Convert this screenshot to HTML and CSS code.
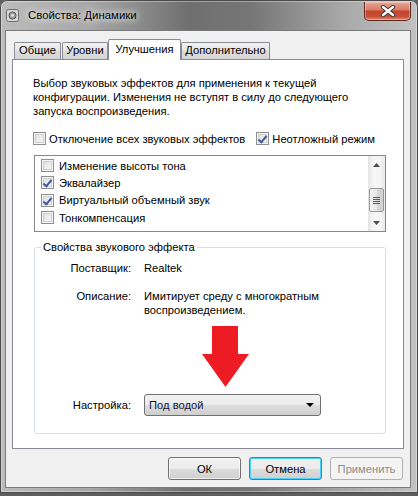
FILE: index.html
```html
<!DOCTYPE html>
<html lang="ru">
<head>
  <meta charset="UTF-8" />
  <title>Свойства: Динамики</title>
  <link rel="stylesheet" href="styles.css">
</head>
<body>
  <div class="window">
    <div class="titlebar">
      <svg class="app-icon" width="13" height="13" viewBox="0 0 13 13">
        <rect x="0.5" y="0.5" width="12" height="12" rx="2" fill="#d8d8d8" stroke="#6c6c6c"/>
        <circle cx="6.5" cy="6.5" r="3.6" fill="#9a9a9a" stroke="#5e5e5e"/>
        <circle cx="6.5" cy="6.5" r="1.4" fill="#e6e6e6"/>
      </svg>
      <span class="title">Свойства: Динамики</span>
      <div class="close-btn">
        <svg width="16" height="12" viewBox="0 0 16 12">
          <path d="M3 2 L13 10 M13 2 L3 10" stroke="#3a3a3a" stroke-width="4.4" stroke-linecap="round"/>
          <path d="M3 2 L13 10 M13 2 L3 10" stroke="#fff" stroke-width="2.4" stroke-linecap="round"/>
        </svg>
      </div>
    </div>

    <div class="client">
      <div class="tabs">
        <div class="tab tab-general">Общие</div>
        <div class="tab tab-levels">Уровни</div>
        <div class="tab tab-active">Улучшения</div>
        <div class="tab tab-advanced">Дополнительно</div>
      </div>

      <div class="panel">
        <p class="intro">Выбор звуковых эффектов для применения к текущей конфигурации. Изменения не вступят в силу до следующего запуска воспроизведения.</p>

        <div class="options">
          <label class="check"><span class="box"></span>Отключение всех звуковых эффектов</label>
          <label class="check"><span class="box checked"></span>Неотложный режим</label>
        </div>

        <div class="listbox">
          <ul class="effects">
            <li class="check"><span class="box"></span>Изменение высоты тона</li>
            <li class="check"><span class="box checked"></span>Эквалайзер</li>
            <li class="check"><span class="box checked"></span>Виртуальный объемный звук</li>
            <li class="check"><span class="box"></span>Тонкомпенсация</li>
          </ul>
          <div class="scrollbar">
            <div class="sb-arrow"><svg width="7" height="4" viewBox="0 0 7 4"><path d="M0 4 L3.5 0 L7 4 Z" fill="#4d4d4d"/></svg></div>
            <div class="sb-track">
              <div class="sb-thumb"><span></span><span></span><span></span><span></span></div>
            </div>
            <div class="sb-arrow"><svg width="7" height="4" viewBox="0 0 7 4"><path d="M0 0 L7 0 L3.5 4 Z" fill="#4d4d4d"/></svg></div>
          </div>
        </div>

        <fieldset class="group">
          <legend>Свойства звукового эффекта</legend>
          <div class="prop-row">
            <span class="prop-label">Поставщик:</span>
            <span class="prop-value">Realtek</span>
          </div>
          <div class="prop-row prop-desc">
            <span class="prop-label">Описание:</span>
            <span class="prop-value">Имитирует среду с многократным<br>воспроизведением.</span>
          </div>
          <svg class="red-arrow" width="47" height="61" viewBox="0 0 47 61">
            <rect x="10" y="0" width="26" height="29" fill="#ed1c24"/>
            <path d="M0 28 L47 28 L23.5 61 Z" fill="#ed1c24"/>
          </svg>
          <div class="prop-row prop-setting">
            <span class="prop-label">Настройка:</span>
            <div class="combo">
              <span>Под водой</span>
              <svg width="8" height="4" viewBox="0 0 8 4"><path d="M0 0 L8 0 L4 4 Z" fill="#000"/></svg>
            </div>
          </div>
        </fieldset>
      </div>

      <div class="buttons">
        <button class="btn">ОК</button>
        <button class="btn btn-focus">Отмена</button>
        <button class="btn" disabled>Применить</button>
      </div>
    </div>
  </div>
</body>
</html>
```

FILE: styles.css
```css
* {
  box-sizing: border-box;
}

body {
  margin: 0;
  width: 418px;
  height: 496px;
  overflow: hidden;
  background: #5e5e5e;
  font-family: "Liberation Sans", "Noto Sans", sans-serif;
  font-size: 11.2px;
  color: #000;
}

.window {
  height: 493px;
  padding: 0 7px 0 5px;
  border-radius: 7px 7px 0 0;
  background: linear-gradient(90deg, #bcbcbc 0%, #a6a6a6 22%, #6f6f6f 45%, #767676 60%, #a8a8a8 82%, #c2c2c2 100%);
  box-shadow: inset 0 0 0 1px #4a4a4a, inset 0 0 0 2px rgba(255,255,255,0.35);
}

.titlebar {
  height: 30px;
  display: flex;
  align-items: flex-start;
  padding-left: 1px;
}

.app-icon {
  margin-top: 9px;
  flex: none;
}

.title {
  margin-top: 8px;
  margin-left: 9px;
  font-size: 11.4px;
  line-height: 14px;
  color: #000;
  text-shadow: 0 0 6px #fff, 0 0 10px rgba(255,255,255,0.8);
}

.close-btn {
  margin-left: auto;
  margin-top: 2px;
  width: 47px;
  height: 19px;
  display: flex;
  align-items: center;
  justify-content: center;
  border: 1px solid #5b2a22;
  border-top: none;
  border-radius: 0 0 5px 5px;
  background: linear-gradient(#e9a596 0%, #d87a66 45%, #c4422a 50%, #c84f35 80%, #e0876b 100%);
  box-shadow: inset 0 0 0 1px rgba(255,255,255,0.35);
}

.client {
  height: 458px;
  border: 1px solid #7b7b7b;
  background: #f0f0f0;
  padding: 8px 6px 6px;
}

/* Tabs */
.tabs {
  display: flex;
  align-items: flex-end;
  height: 20px;
  padding-left: 2px;
}

.tab {
  height: 17px;
  line-height: 15px;
  text-align: center;
  border: 1px solid #898c95;
  border-bottom: none;
  border-radius: 2px 2px 0 0;
  background: linear-gradient(#f3f3f3, #e4e4e4 50%, #dcdcdc 51%, #d6d6d6);
}

.tab-general { width: 47px; margin-right: 1px; }
.tab-levels { width: 46px; }
.tab-advanced { width: 89px; }

.tab-active {
  position: relative;
  z-index: 1;
  width: 73px;
  height: 21px;
  margin-bottom: -1px;
  line-height: 18px;
  background: #fff;
}

.panel {
  height: 390px;
  border: 1px solid #898c95;
  background: #fff;
  padding: 16px 17px 14px 21px;
}

.intro {
  margin: 0 0 0 -1px;
  line-height: 14px;
  width: 330px;
}

/* Checkboxes */
.options {
  display: flex;
  gap: 11px;
  margin: 14px 0 0 -1px;
  height: 13px;
}

.check {
  display: flex;
  align-items: center;
  gap: 3px;
  line-height: 14px;
  white-space: nowrap;
}

.box {
  flex: none;
  width: 13px;
  height: 13px;
  border: 1px solid #8f8f8f;
  background: linear-gradient(135deg, #dcdcdc, #fbfbfb);
  box-shadow: inset 0 0 0 1px #f4f4f4, inset 0 0 0 2px #d0d0d0;
  position: relative;
}

.box.checked::after {
  content: "";
  position: absolute;
  left: 3px;
  top: 1px;
  width: 3px;
  height: 7px;
  border: solid #3d5aa0;
  border-width: 0 2px 2px 0;
  transform: rotate(40deg);
}

/* List box */
.listbox {
  margin-top: 10px;
  height: 77px;
  border: 1px solid #828790;
  display: flex;
}

.effects {
  flex: 1;
  list-style: none;
  margin: 0;
  padding: 1px 0 0 6px;
}

.effects .check {
  height: 17.3px;
  gap: 5px;
}

.scrollbar {
  width: 17px;
  display: flex;
  flex-direction: column;
  background: linear-gradient(90deg, #e4e4e4, #f5f5f5 30%, #f5f5f5 70%, #e8e8e8);
}

.sb-arrow {
  height: 17px;
  display: flex;
  align-items: center;
  justify-content: center;
}

.sb-track {
  flex: 1;
  padding-top: 15px;
}

.sb-thumb {
  width: 15px;
  height: 24px;
  margin-left: 1px;
  border: 1px solid #989898;
  border-radius: 2px;
  background: linear-gradient(90deg, #f3f3f3, #e6e6e6 50%, #d9d9d9 51%, #d0d0d0);
  display: flex;
  flex-direction: column;
  justify-content: center;
  align-items: center;
  gap: 1px;
}

.sb-thumb span {
  width: 7px;
  height: 1px;
  background: #5a5a5a;
}

/* Group */
.group {
  margin: 8px 0 0;
  padding: 7px 0 17px;
  height: 194px;
  border: 1px solid #d5dfe5;
  border-radius: 3px;
}

.group legend {
  margin-left: 6px;
  padding: 0 2px;
  line-height: 14px;
  color: #000;
}

.prop-row {
  display: flex;
  gap: 13px;
  line-height: 14px;
}

.prop-label {
  width: 96px;
  text-align: right;
  flex: none;
}

.prop-desc {
  margin-top: 14px;
}

.red-arrow {
  display: block;
  margin: 9px 0 0 167px;
}

.prop-setting {
  margin-top: 7px;
  align-items: center;
}

.combo {
  width: 177px;
  height: 22px;
  display: flex;
  align-items: center;
  justify-content: space-between;
  padding: 0 6px 0 4px;
  border: 1px solid #707070;
  border-radius: 3px;
  background: linear-gradient(#f2f2f2, #ebebeb 50%, #dddddd 51%, #cfcfcf);
  color: #141436;
}

/* Buttons */
.buttons {
  display: flex;
  justify-content: flex-end;
  gap: 8px;
  margin-top: 8px;
  padding-right: 1px;
}

.btn {
  width: 73px;
  height: 23px;
  padding: 0;
  font-family: inherit;
  font-size: 11.2px;
  color: #000;
  border: 1px solid #707070;
  border-radius: 3px;
  background: linear-gradient(#f2f2f2, #ebebeb 50%, #dddddd 51%, #cfcfcf);
  box-shadow: inset 0 0 0 1px rgba(255,255,255,0.7);
}

.btn-focus {
  border-color: #3c7fb1;
  box-shadow: inset 0 0 0 1px #48d4fd;
}

.btn:disabled {
  color: #8d8d8d;
  border-color: #adb2b5;
  background: #f4f4f4;
  box-shadow: none;
}
```
